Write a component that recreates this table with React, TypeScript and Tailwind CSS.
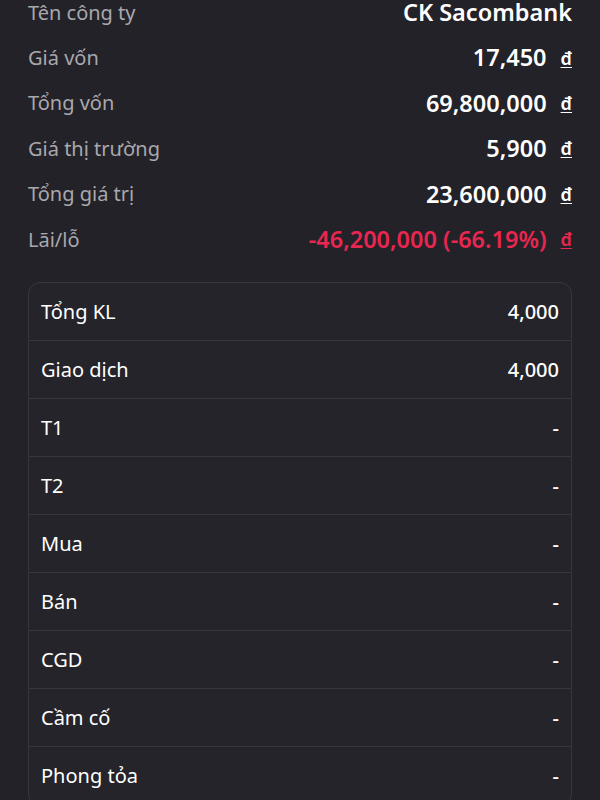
import React from 'react';

const summary = [
  { label: 'Tên công ty', value: 'CK Sacombank', unit: false },
  { label: 'Giá vốn', value: '17,450', unit: true },
  { label: 'Tổng vốn', value: '69,800,000', unit: true },
  { label: 'Giá thị trường', value: '5,900', unit: true },
  { label: 'Tổng giá trị', value: '23,600,000', unit: true },
  { label: 'Lãi/lỗ', value: '-46,200,000 (-66.19%)', unit: true, loss: true },
];

const volumes = [
  { label: 'Tổng KL', value: '4,000' },
  { label: 'Giao dịch', value: '4,000' },
  { label: 'T1', value: '-' },
  { label: 'T2', value: '-' },
  { label: 'Mua', value: '-' },
  { label: 'Bán', value: '-' },
  { label: 'CGD', value: '-' },
  { label: 'Cầm cố', value: '-' },
  { label: 'Phong tỏa', value: '-' },
];

const App: React.FC = () => {
  return (
    <div className="h-[800px] overflow-hidden bg-[#232229] font-['Noto_Sans',sans-serif]">
      <div className="px-[28px] -mt-[10px]">
        {summary.map(row => (
          <div key={row.label} className="flex items-center justify-between h-[45.4px]">
            <span className="text-[20px] text-[#a9a8ad]">{row.label}</span>
            <span className={`flex items-center text-[23.5px] font-semibold ${row.loss ? 'text-[#e8264f]' : 'text-white'}`}>
              {row.value}
              {row.unit && <span className="ml-[14px] text-[18px] underline underline-offset-2">đ</span>}
            </span>
          </div>
        ))}
      </div>

      <div className="mx-[28px] mt-[20px] rounded-xl border border-[#38373e] bg-[#25242a]">
        {volumes.map(row => (
          <div key={row.label} className="flex items-center justify-between h-[58px] px-[12px] border-b border-[#38373e] last:border-b-0">
            <span className="text-[20px] text-white">{row.label}</span>
            <span className="text-[20px] font-medium text-white">{row.value}</span>
          </div>
        ))}
      </div>
    </div>
  );
};

export default App;
